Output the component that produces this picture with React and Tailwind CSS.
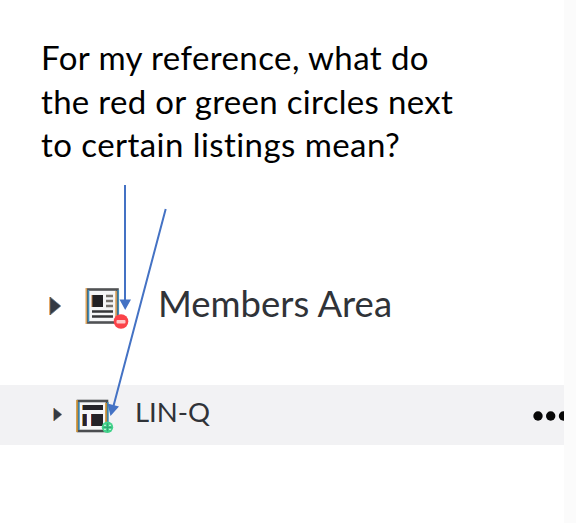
import React from 'react';

const questionLines = [
  { text: 'For my reference, what do', spacing: 'tracking-[0.42px]' },
  { text: 'the red or green circles next', spacing: 'tracking-[0.31px]' },
  { text: 'to certain listings mean?', spacing: 'tracking-[0.44px]' },
];

const Caret = ({ className }) => (
  <svg viewBox="0 0 12 18" preserveAspectRatio="none" className={className}>
    <path d="M0 0H1.5L12 9L1.5 18H0Z" fill="#343a44" />
    <path d="M2 1L12 9L2 17" fill="none" stroke="#6fa7d8" strokeOpacity="0.5" strokeWidth="1" />
    <path d="M0.5 0V18" stroke="#e5a968" strokeWidth="1.4" />
  </svg>
);

// Article page with the "no entry" badge
const ArticleIcon = () => (
  <svg width="46" height="42" viewBox="0 0 46 42" className="shrink-0">
    <rect x="2.5" y="2.5" width="30" height="33" fill="#f5f6f7" stroke="#505254" strokeWidth="2.6" />
    <path d="M1.3 1V37M31 4V34" stroke="#dda35a" strokeWidth="1.6" />
    <path d="M3.5 3V35M33.3 3V30" stroke="#3d8ebd" strokeWidth="1.6" />
    <rect x="7" y="8" width="11" height="12" fill="#202024" />
    <path d="M7 8V20" stroke="#b87437" strokeWidth="1" />
    <path d="M21 9H28M21 14H28M21 19H28" stroke="#77736e" strokeWidth="2.4" />
    <path d="M7 24.5H28M7 29.5H28" stroke="#353638" strokeWidth="2.6" />
    <circle cx="36" cy="34.5" r="7.3" fill="#fb4349" />
    <rect x="31.5" y="33" width="9" height="3.4" rx="1" fill="#ffc9c9" />
  </svg>
);

// Page layout with the green badge
const LayoutIcon = () => (
  <svg width="40" height="36" viewBox="0 0 40 36" className="shrink-0">
    <rect x="2" y="2" width="29" height="30" fill="#f5f6f8" stroke="#4b4d50" strokeWidth="2.6" />
    <path d="M1 1V33M30 4V30" stroke="#d99a36" strokeWidth="1.6" />
    <path d="M3 3V31M32 3V26" stroke="#3c9bcb" strokeWidth="1.3" />
    <path d="M6 6H27V11H6ZM6 15H11V27H6ZM15 15H27V27H15Z" fill="#242329" />
    <path d="M6.5 6V11M6.5 15V27" stroke="#c78a3c" strokeWidth="1" />
    <path d="M10.5 15V27" stroke="#38418d" strokeWidth="1" />
    <path d="M15.5 15V27" stroke="#7e3528" strokeWidth="1" />
    <circle cx="31.5" cy="28.3" r="5.7" fill="#43d38b" />
    <path d="M31.5 24.3V32.3M27.5 28.3H35.5" stroke="#32a975" strokeWidth="1.2" />
    <path d="M28 26.3H30M33 26.3H35M28 30.3H30M33 30.3H35" stroke="#b8f0d5" strokeWidth="1.2" />
  </svg>
);

const Arrows = () => (
  <svg width="576" height="523" className="pointer-events-none absolute left-0 top-0">
    <g stroke="#4472c4" strokeWidth="2" fill="#4472c4">
      <path d="M125 185V300M165.7 209L113.5 406" />
      <path d="M119.5 299.5H131L125.2 310ZM107.5 403.5L119 406.5L110.5 416Z" stroke="none" />
    </g>
  </svg>
);

export default function App() {
  return (
    <div className="relative flex h-[523px] w-[576px] overflow-hidden bg-white font-['Lato',sans-serif]">
      <main className="flex w-[564px] flex-col overflow-hidden">
        <div className="pl-[41px] pt-[36px] text-[33px] leading-[43.5px] text-black">
          {questionLines.map((line) => (
            <p key={line.text} className={`whitespace-nowrap ${line.spacing}`}>{line.text}</p>
          ))}
        </div>

        <div className="mt-[100.5px] flex h-[78px] items-center pl-[49px]">
          <Caret className="h-[18px] w-3 shrink-0" />
          <span className="ml-[24px] mt-[4px]"><ArticleIcon /></span>
          <span className="mb-[5px] ml-[27px] whitespace-nowrap text-[36.5px] leading-none text-[#303338]">Members Area</span>
        </div>

        <div className="mt-[40px] flex h-[60px] shrink-0 items-center bg-[#f2f2f4] pl-[53px]">
          <Caret className="mb-[2px] h-[13px] w-[9px] shrink-0" />
          <span className="ml-[14px] mt-[3px]"><LayoutIcon /></span>
          <span className="mb-[6px] ml-[19px] whitespace-nowrap text-[27.5px] leading-none text-[#303338]">LIN-Q</span>
          <svg width="31" height="10" viewBox="0 0 31 10" className="ml-auto mt-[2px] shrink-0" fill="#080808">
            <circle cx="5" cy="5" r="4.7" />
            <circle cx="17.7" cy="5" r="4.7" />
            <circle cx="30.5" cy="5" r="4.7" />
          </svg>
        </div>
      </main>
      <aside className="flex-1 bg-[#fbfbfb]" />
      <Arrows />
    </div>
  );
}
